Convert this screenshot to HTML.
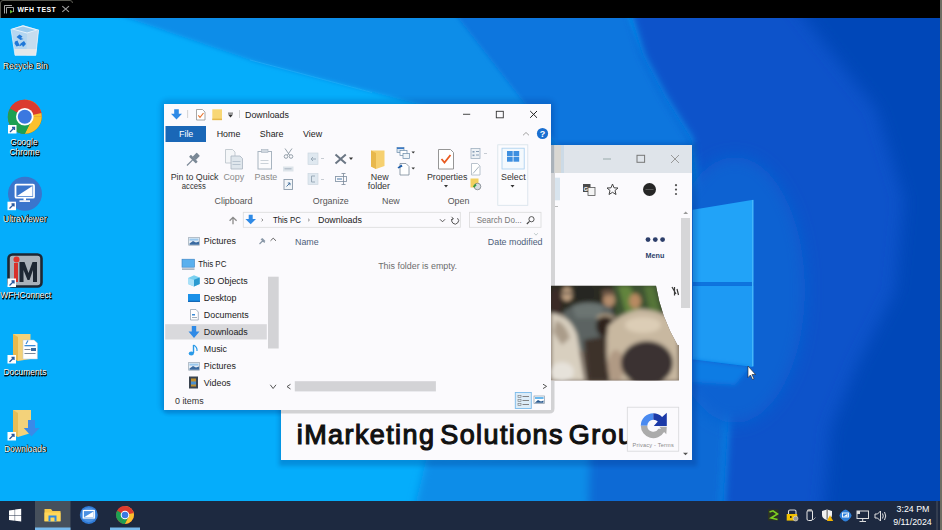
<!DOCTYPE html>
<html><head><meta charset="utf-8">
<style>
*{margin:0;padding:0;box-sizing:border-box}
html,body{width:942px;height:530px;overflow:hidden;background:#000;font-family:"Liberation Sans",sans-serif}
.abs{position:absolute}
#bg{position:absolute;left:0;top:18px;width:942px;height:483px}
#topbar{position:absolute;left:0;top:0;width:942px;height:18px;background:#000}
#taskbar{position:absolute;left:0;top:501px;width:942px;height:29px;background:#1d2940}
#rstrip{position:absolute;left:940px;top:0;width:2px;height:530px;background:#6e6e64}
.lbl{position:absolute;color:#fff;font-size:9.5px;text-align:center;white-space:nowrap;text-shadow:0 0 1px #000,1px 1px 1px #000}
.t{position:absolute;white-space:nowrap;line-height:1}
</style></head><body>
<svg id="bg" width="942" height="483" viewBox="0 18 942 483">
  <defs>
    <filter id="bl" x="-20%" y="-20%" width="140%" height="140%"><feGaussianBlur stdDeviation="8"/></filter>
    <filter id="bl2" x="-20%" y="-20%" width="140%" height="140%"><feGaussianBlur stdDeviation="2"/></filter>
    <filter id="bl3" x="-20%" y="-20%" width="140%" height="140%"><feGaussianBlur stdDeviation="4"/></filter>
  </defs>
  <rect x="0" y="18" width="942" height="483" fill="#05adfb"/>
  <g filter="url(#bl2)">
    <polygon points="104,10 470,10 600,160 640,260 540,170 470,118 372,92 256,62" fill="#0a8de8"/>
  </g>
  <g filter="url(#bl2)">
    <polygon points="452,10 626,10 643,56 665,97.6 691,139 694,196 640,230 600,200 515,91" fill="#0a76de"/>
  </g>
  <line x1="250" y1="60" x2="372" y2="92.5" stroke="#3ab8fa" stroke-width="0.8" opacity="0.5"/>
  <g filter="url(#bl3)">
    <polygon points="427,456 592,452 588,510 414,510" fill="#0a8de8"/>
    <polygon points="590,440 660,300 760,300 729,400 722,510 588,510" fill="#0a6ad5"/>
  </g>
  <g filter="url(#bl3)">
    <polygon points="626,0 960,0 960,520 722,520 729,400 752,368 765,240 700,205 691,139 665,97.6 643,56" fill="#0853ca"/>
  </g>
  <g filter="url(#bl)">
    <polygon points="790,0 960,0 960,520 822,520 831,427 858,363 895,291 904,200 876,109" fill="#0647b8"/>
    <ellipse cx="735" cy="290" rx="70" ry="133" fill="#0a62d2"/>
  </g>
  <polygon points="692.7,209.7 753.3,199.8 753.3,282.2 692.7,282.2" fill="#21a3f8"/>
  <polygon points="692.7,285.7 753.3,285.7 753.3,367 692.7,359.5" fill="#1d9af4"/>
  <rect x="692" y="282.2" width="61.3" height="3.5" fill="#0e74de"/>
  <polygon points="692,359.5 750,367 735,385 692,382" fill="#0a7ce4" filter="url(#bl2)"/>
  <rect x="752" y="200" width="1.4" height="166" fill="#45b6fa"/>
  <path d="M748,366 V377.5 L750.5,375 L752.5,379.5 L754,378.8 L752,374.5 H755.5Z" fill="#fff" stroke="#222" stroke-width="0.6"/>
</svg>
<div id="topbar">
<svg class="abs" style="left:0;top:0" width="942" height="18" font-family="Liberation Sans">
  <path d="M0.5,18 V3 Q0.5,0.5 3,0.5 H70 Q72.5,0.5 72.5,3" stroke="#5c5c54" stroke-width="1" fill="none"/>
  <path d="M4.5,13.5 V5.5 H12" stroke="#b8b8b8" stroke-width="0.9" fill="none"/>
  <path d="M6.5,13.5 V7.5 H13.5 V12" stroke="#b8b8b8" stroke-width="0.9" fill="none"/>
  <path d="M10,9.8 L13.2,11.7 L10,13.6Z" fill="#62b331"/>
  <text x="17.4" y="11.9" font-size="6.9" font-weight="bold" fill="#fff" letter-spacing="0.45">WFH TEST</text>
  <path d="M62.3,6.2 L69,11.9 M69,6.2 L62.3,11.9" stroke="#a0a0a0" stroke-width="1.1"/>
</svg>
</div>
<!-- desktop icons -->
<svg class="abs" style="left:0;top:18px" width="60" height="460" viewBox="0 18 60 460">
  <!-- recycle bin -->
  <path d="M11,29.5 L36,55.5 H15Z" fill="none"/>
  <path d="M11,29 L15,55.3 H35.8 L38.6,29.8 L23,25.3Z" fill="#b4d6f0"/>
  <path d="M27,33.5 L38.6,29.8 L35.8,55.3 H26.5Z" fill="#c6dcee"/>
  <path d="M11,29 L23,25.3 L38.6,29.8 L27,33.5Z" fill="#eaf4fb"/>
  <path d="M14,29 L23,26.5 L35.5,30 L27,32.5Z" fill="#9ccbed"/>
  <path d="M14.5,49 H36.5 L35.8,55.3 H15Z" fill="#e4e8ea"/>
  <path d="M11,29 L15,55.3 H35.8 L38.6,29.8" fill="none" stroke="#eef6fc" stroke-width="0.7"/>
  <g fill="#1f78d8">
    <path d="M16.5,37 L19.5,34.5 L22.5,36.5 L21,38 L23.5,39 L20.5,40 Z"/>
    <path d="M24,41 L26,44 L23,47 L22,45 L19.5,46.5 L20.5,43.5Z"/>
    <path d="M15,41.5 L17.5,40.5 L18.5,43 L20,45.5 L16.5,46.5 L14.5,43.5Z"/>
  </g>
  <!-- chrome -->
  <circle cx="24.8" cy="116.8" r="17" fill="#db3b2f"/>
  <path d="M24.8,116.8 L10.1,108.3 A17,17 0 0 0 16.3,131.5 Z" fill="#1da052"/>
  <path d="M24.8,116.8 L41.8,116.8 A17,17 0 0 1 16.3,131.5 Z" fill="#1da052"/>
  <path d="M24.8,116.8 L41.8,116.8 A17,17 0 0 1 24.8,133.8 L33.3,116.8Z" fill="#fbc02d"/>
  <path d="M24.8,116.8 L16.3,131.5 A17,17 0 0 0 24.8,133.8 L33.3,116.8Z" fill="#1da052"/>
  <path d="M24.8,116.8 L24.8,99.8 A17,17 0 0 1 41.8,116.8Z" fill="#fbc02d"/>
  <path d="M24.8,99.8 A17,17 0 0 0 10.1,108.3 L24.8,116.8 L41.5,113 A17,17 0 0 0 24.8,99.8Z" fill="#db3b2f"/>
  <circle cx="24.8" cy="116.8" r="8.8" fill="#fff"/>
  <circle cx="24.8" cy="116.8" r="7" fill="#3b78e0"/>
  <rect x="8" y="125" width="8.5" height="8.5" fill="#fff"/><path d="M10,132 L14.5,127.5 M12,127.5 H14.5 V130" stroke="#2a5aa0" stroke-width="1.3" fill="none"/>
  <!-- ultraviewer -->
  <circle cx="25" cy="193.8" r="17" fill="#3a75cc"/>
  <rect x="15.5" y="184.7" width="18.5" height="13" rx="1" fill="none" stroke="#fff" stroke-width="1.8"/>
  <path d="M17,196 L32.5,186 L32.5,196Z" fill="#fff"/>
  <rect x="23.5" y="198" width="2.5" height="2.5" fill="#fff"/><rect x="19.5" y="200.3" width="10.5" height="1.6" fill="#fff"/>
  <rect x="7.5" y="201.7" width="8.5" height="8.5" fill="#fff"/><path d="M9.5,208.5 L14,204 M11.5,204 H14 V206.5" stroke="#2a5aa0" stroke-width="1.3" fill="none"/>
  <!-- wfhconnect -->
  <rect x="8.5" y="254.5" width="33" height="32" rx="4" fill="#a9b1b9" stroke="#1d2733" stroke-width="2.6"/>
  <rect x="14" y="263" width="4" height="19" fill="#d8302a"/>
  <circle cx="16.5" cy="259.5" r="3" fill="#e0342c"/>
  <path d="M19.5,282 V262 H24.5 L28.5,273 L32.5,262 H37 V282 H33 V270 L29.5,280 H27.5 L23.5,270 V282Z" fill="#1d2733"/>
  <rect x="7.5" y="278.5" width="8.5" height="8.5" fill="#fff"/><path d="M9.5,285.5 L14,281 M11.5,281 H14 V283.5" stroke="#2a5aa0" stroke-width="1.3" fill="none"/>
  <!-- documents -->
  <path d="M13,334 H30.5 V359 L18,361 L13,358Z" fill="#f3d27a"/>
  <path d="M13,334 L18,337 V361 L13,358Z" fill="#e8b94e"/>
  <path d="M23,340 H34 L37.4,343 V359 H23Z" fill="#fff" stroke="#b8c4d0" stroke-width="0.5"/>
  <rect x="24.5" y="345" width="11" height="1.3" fill="#3a8ad8"/>
  <rect x="24.5" y="349" width="6" height="1" fill="#7a8898"/><rect x="31" y="348" width="5" height="3" fill="#3a6aa0"/>
  <rect x="24.5" y="353" width="11" height="1" fill="#7a8898"/>
  <path d="M26,344 L28,340.5" stroke="#3a8ad8" stroke-width="1.2"/>
  <rect x="7.5" y="355" width="8.5" height="8.5" fill="#fff"/><path d="M9.5,362 L14,357.5 M11.5,357.5 H14 V360" stroke="#2a5aa0" stroke-width="1.3" fill="none"/>
  <!-- downloads -->
  <path d="M13,410 H31 V433 L18,437 L13,434Z" fill="#f3d27a"/>
  <path d="M13,410 L18,413 V437 L13,434Z" fill="#e8bd55"/>
  <path d="M28,420 H35 V428 H39.6 L31.5,436.5 L23.8,428 H28Z" fill="#3a8ae8"/>
  <rect x="7.5" y="432" width="8.5" height="8.5" fill="#fff"/><path d="M9.5,439 L14,434.5 M11.5,434.5 H14 V437" stroke="#2a5aa0" stroke-width="1.3" fill="none"/>
</svg>
<svg class="abs" style="left:0;top:0" width="60" height="460" font-family="Liberation Sans" font-size="8.5" text-anchor="middle">
  <defs><filter id="ls" x="-20%" y="-50%" width="140%" height="200%"><feGaussianBlur stdDeviation="0.5"/></filter></defs>
  <g fill="#000" opacity="0.9" filter="url(#ls)" transform="translate(0.7,0.8)" stroke="#000" stroke-width="0.8">
    <text x="25.5" y="68.5">Recycle Bin</text>
    <text x="24" y="145.3">Google</text>
    <text x="24.5" y="155">Chrome</text>
    <text x="24.9" y="221.5">UltraViewer</text>
    <text x="25.7" y="298">WFHConnect</text>
    <text x="24.9" y="374.8">Documents</text>
    <text x="25.2" y="451.5">Downloads</text>
  </g>
  <g fill="#fff">
    <text x="25.5" y="68.5">Recycle Bin</text>
    <text x="24" y="145.3">Google</text>
    <text x="24.5" y="155">Chrome</text>
    <text x="24.9" y="221.5">UltraViewer</text>
    <text x="25.7" y="298">WFHConnect</text>
    <text x="24.9" y="374.8">Documents</text>
    <text x="25.2" y="451.5">Downloads</text>
  </g>
</svg>
<div id="taskbar">
<svg class="abs" style="left:0;top:0" width="942" height="29" viewBox="0 501 942 29">
  <rect x="35" y="501" width="35.5" height="29" fill="#46505c"/>
  <rect x="35" y="527.5" width="35.5" height="2.5" fill="#76b9ed"/>
  <rect x="110" y="527.5" width="30" height="2.5" fill="#76b9ed"/>
  <!-- win logo -->
  <path d="M9,510.5 L14.7,509.7 V515 H9Z M15.1,509.6 L21.2,508.8 V515 H15.1Z M9,515.4 H14.7 V520.7 L9,520Z M15.1,515.4 H21.2 V521.6 L15.1,520.8Z" fill="#fff"/>
  <!-- explorer folder -->
  <path d="M44.5,509 H51 L52.5,511 H60.5 V521.3 H44.5Z" fill="#f7c948"/>
  <path d="M44.5,512.5 H60.5 V521.3 H44.5Z" fill="#ffd75a"/>
  <rect x="48.5" y="515.5" width="8" height="5.8" fill="#2e86de"/>
  <rect x="50.5" y="517.5" width="4" height="3.8" fill="#ffd75a"/>
  <!-- ultraviewer -->
  <circle cx="88.8" cy="514.9" r="9" fill="#2f7ad6"/>
  <circle cx="88.8" cy="514.9" r="7.3" fill="#4a90e2"/>
  <rect x="83.3" y="510.5" width="11" height="7.5" fill="none" stroke="#fff" stroke-width="1.2"/>
  <path d="M84.5,517 L93.5,511.5 V517Z" fill="#fff"/>
  <!-- chrome -->
  <circle cx="125" cy="515" r="9" fill="#db3b2f"/>
  <path d="M125,515 L117.2,510.5 A9,9 0 0 0 120.5,522.8 L125,515Z" fill="#1da052"/>
  <path d="M125,515 L120.5,522.8 A9,9 0 0 0 125,524 L129.5,515Z" fill="#1da052"/>
  <path d="M125,515 H134 A9,9 0 0 1 125,524 L129.5,515Z" fill="#fbc02d"/>
  <path d="M125,515 V506 A9,9 0 0 1 134,515Z" fill="#fbc02d"/>
  <path d="M125,506 A9,9 0 0 0 117.2,510.5 L125,515 L133.8,513 A9,9 0 0 0 125,506Z" fill="#db3b2f"/>
  <circle cx="125" cy="515" r="4.3" fill="#fff"/><circle cx="125" cy="515" r="3.3" fill="#3b78e0"/>
  <!-- tray -->
  <rect x="768" y="509.5" width="10.5" height="11" fill="#2c3324"/>
  <path d="M769.5,512 L773,510.8 L777.5,514 L771,518 L777.5,519.5" stroke="#7ccf22" stroke-width="1.6" fill="none"/>
  <path d="M788.5,514 V511.5 Q788.5,510 790,510 H794.5 Q796,510 796,511.5 V514" stroke="#d8d8d8" stroke-width="1.1" fill="none"/>
  <rect x="786.7" y="514" width="10.5" height="6.6" fill="#f2c100"/>
  <rect x="790" y="516" width="1.6" height="2" fill="#3a3000"/>
  <circle cx="795.6" cy="518.6" r="2.4" fill="#9a9a9a" stroke="#ddd" stroke-width="0.6"/>
  <path d="M807,512 Q807,510 809,510 H811 Q812.5,510 812.5,512 V519 Q812.5,520.5 811,520.5 H808.5 Q807,520.5 807,519Z" fill="none" stroke="#e8e8e8" stroke-width="1"/>
  <rect x="807.5" y="509.5" width="4.5" height="2" fill="#bbb"/>
  <path d="M813,520 L815.5,517.5" stroke="#bbb" stroke-width="0.8"/>
  <path d="M822,511 L827,509.5 L832,511 V515 Q832,518.5 827,520 Q822,518.5 822,515Z" fill="#f0f0f0"/>
  <rect x="826.6" y="509.8" width="1" height="9.5" fill="#555"/>
  <path d="M830,515.3 L833.2,521 H826.8Z" fill="#f4b400"/>
  <path d="M845.5,509.5 Q847,509.5 849.5,512 Q851.5,514 851.5,515.5 Q851.5,517 849.5,519 Q847,521.5 845.5,521.5 Q844,521.5 841.5,519 Q839.5,517 839.5,515.5 Q839.5,514 841.5,512 Q844,509.5 845.5,509.5Z" fill="#2f80da"/>
  <rect x="842.5" y="513" width="6" height="4" fill="none" stroke="#fff" stroke-width="0.9"/>
  <path d="M843.5,516.5 L847.5,513.8 V516.5Z" fill="#fff"/>
  <rect x="857" y="511" width="11.5" height="7.5" fill="none" stroke="#ddd" stroke-width="1"/>
  <path d="M862.7,518.5 V521.5 M859.5,521.5 H866" stroke="#ddd" stroke-width="1"/>
  <rect x="857" y="511" width="3" height="3" fill="#ddd"/>
  <path d="M875,514 H877.5 L880.5,511 V521 L877.5,518 H875Z" fill="none" stroke="#e0e0e0" stroke-width="1"/>
  <path d="M882.5,513.5 Q884,516 882.5,518.5 M884.5,512 Q887,516 884.5,520" stroke="#e0e0e0" fill="none" stroke-width="1"/>
  <rect x="936.5" y="501" width="1" height="29" fill="#4a5360"/>
  <text x="913" y="511.8" font-family="Liberation Sans" font-size="8.8" fill="#fff" text-anchor="middle">3:24 PM</text>
  <text x="912.5" y="524.8" font-family="Liberation Sans" font-size="8.8" fill="#fff" text-anchor="middle">9/11/2024</text>
</svg>
</div>

<div class="abs" style="left:164px;top:104px;width:387px;height:306px;border-radius:4px;box-shadow:0 -1px 4px 4px rgba(0,40,120,0.16), 0 3px 3px 1px rgba(0,40,120,0.14)"></div>
<!-- chrome window -->
<div class="abs" style="left:281.5px;top:145px;width:410.5px;height:315px;background:#fbfafd;box-shadow:1px 2px 4px 4px rgba(0,30,110,0.22)"></div>
<svg class="abs" style="left:281px;top:145px" width="411" height="315" viewBox="281 145 411 315" font-family="Liberation Sans">
  <defs>
    <filter id="pb" x="-5%" y="-5%" width="110%" height="110%"><feGaussianBlur stdDeviation="2"/></filter>
    <clipPath id="pc"><path d="M551,285.8 H656 Q661,317 677.5,345 L679,345 V380.6 H551Z"/></clipPath>
  </defs>
  <rect x="281" y="145" width="411" height="28" fill="#dfe4ea"/>
  <rect x="551" y="145" width="3.5" height="28" fill="#aab2ba"/>
  <rect x="554.5" y="145" width="6.5" height="28" fill="#d9d7d2"/>
  <rect x="561" y="145" width="3" height="28" fill="#ccdae6"/>
  <rect x="603" y="158.5" width="8" height="1" fill="#9aa"/>
  <rect x="637" y="155.3" width="7.6" height="7" fill="none" stroke="#777" stroke-width="1"/>
  <path d="M671,155 L679,163 M679,155 L671,163" stroke="#999" stroke-width="1"/>
  <rect x="281" y="173" width="411" height="287" fill="#fbfafd"/>
  <rect x="551" y="173" width="4" height="112.8" fill="#d4d4d6"/>
  <rect x="555" y="177.7" width="5" height="22.6" fill="#d8e4ee"/>
  <rect x="555" y="206" width="3" height="0.8" fill="#aaa"/>
  <!-- toolbar icons -->
  <rect x="583" y="184" width="7.5" height="8" fill="#4a4a4a"/>
  <rect x="588" y="187.5" width="7" height="8" fill="#f4f4f4" stroke="#555" stroke-width="0.8"/>
  <text x="583.8" y="190.5" font-size="5.5" fill="#fff" font-weight="bold">G</text>
  <path d="M612.5,184 L614,187.8 L618,188 L615,190.5 L616,194.5 L612.5,192.3 L609,194.5 L610,190.5 L607,188 L611,187.8Z" fill="none" stroke="#444" stroke-width="1"/>
  <circle cx="649.5" cy="189.5" r="6.5" fill="#262626"/>
  <rect x="645.5" y="189" width="8" height="1" fill="#555"/>
  <circle cx="676" cy="185.2" r="1.1" fill="#555"/><circle cx="676" cy="189.6" r="1.1" fill="#555"/><circle cx="676" cy="194" r="1.1" fill="#555"/>
  <!-- page -->
  <path d="M683.3,214 L685.7,211.6 L688.1,214Z" fill="#999"/>
  <rect x="681" y="218" width="9" height="90" fill="#d6d6d8"/>
  <path d="M683,452.8 H688 L685.5,455.3Z" fill="#555"/>
  <circle cx="648" cy="239.6" r="2.4" fill="#2c3e6a"/><circle cx="655.3" cy="239.6" r="2.4" fill="#2c3e6a"/><circle cx="662.6" cy="239.6" r="2.4" fill="#2c3e6a"/>
  <text x="645.6" y="257.6" font-size="7.2" font-weight="bold" fill="#2c3e6a">Menu</text>
  <!-- photo -->
  <g clip-path="url(#pc)">
    <rect x="551" y="285.8" width="128" height="95" fill="#6a5e54"/>
    <g filter="url(#pb)">
      <rect x="545" y="280" width="140" height="34" fill="#2a2a22"/>
      <path d="M612,284 L660,284 L664,320 L616,318Z" fill="#3e5232"/>
      <path d="M618,286 L630,286 L640,312 L626,314Z" fill="#62843e"/>
      <path d="M644,286 L654,286 L660,312 L650,312Z" fill="#557538"/>
      <ellipse cx="556" cy="302" rx="6" ry="14" fill="#3a2c26"/>
      <ellipse cx="567" cy="294" rx="5.5" ry="7" fill="#c4a484"/>
      <rect x="562" y="292" width="10" height="2.3" fill="#3a3a3a"/>
      <ellipse cx="609" cy="300" rx="6" ry="7" fill="#b48c6c"/>
      <ellipse cx="608" cy="292.5" rx="7" ry="3" fill="#6a5444"/>
      <ellipse cx="635" cy="301" rx="6" ry="7.5" fill="#b88a62"/>
      <path d="M563,312 Q586,296 612,308 L616,350 L600,352 L570,350Z" fill="#5c6462"/>
      <path d="M572,306 Q588,299 604,306 L600,318 L576,318Z" fill="#6c7472"/>
      <ellipse cx="585" cy="293" rx="9" ry="8" fill="#252522"/>
      <path d="M551,313 Q570,315 577,335 L585,381 L551,381Z" fill="#d8cfbf"/>
      <path d="M556,320 Q566,324 570,338 L562,345 L553,332Z" fill="#aa9c8a"/>
      <ellipse cx="562" cy="372" rx="12" ry="10" fill="#e6e2da"/>
      <path d="M584,340 L606,336 L612,381 L588,381Z" fill="#3e322a"/>
      <ellipse cx="605" cy="326" rx="9" ry="11" fill="#2e221b"/>
      <path d="M597,318 Q605,312 613,318" stroke="#c8b090" stroke-width="2" fill="none"/>
      <path d="M608,326 Q622,312 640,309 Q662,310 678,324 L679,381 L610,381 Q604,350 608,326Z" fill="#c8b8a0"/>
      <ellipse cx="643" cy="325" rx="18" ry="8" fill="#dccdb6"/>
      <ellipse cx="616" cy="366" rx="8" ry="16" fill="#b09a84"/>
      <ellipse cx="647" cy="363" rx="26" ry="22" fill="#3a3330"/>
    </g>
  </g>
  <path d="M672,287 L676,294 M674.5,287 V295.5 M677,289 L678.5,295" stroke="#3a3a3a" stroke-width="1.2" fill="none"/>
  <!-- bottom -->
  <path d="M281,410 H551 V381 H554.5 V408.5 Q554.5,413.5 549.5,413.5 H281Z" fill="#d2d2d4"/>
  <text x="296.8" y="443.6" font-size="27" fill="#111" stroke="#111" stroke-width="1.15" letter-spacing="1.4" word-spacing="-4">iMarketing Solutions Group</text>
  <rect x="627.3" y="407.2" width="51.4" height="44" fill="#fbfafd" stroke="#d8d8da" stroke-width="0.8"/>
  <g transform="translate(653.3,425.7)">
    <path d="M0,-12.5 A12.5,12.5 0 0 0 -12.5,0 H-6 A6,6 0 0 1 0,-6Z" fill="#4a8af0"/>
    <path d="M0,-12.5 A12.5,12.5 0 0 1 8.8,-8.8 L13.5,-13 V0.3 H0.5 L4.5,-4.2 A6,6 0 0 0 0,-6Z" fill="#1c3aa8"/>
    <path d="M-12.5,0 A12.5,12.5 0 0 0 10.8,6.25 L13,8.5 L13.5,1 L6,1 L7.8,3 L5.2,3 A6,6 0 0 1 -6,0Z" fill="#ababab"/>
  </g>
  <text x="632.5" y="446.8" font-size="5.6" fill="#8a8a8a" letter-spacing="0.2">Privacy - Terms</text>
</svg>
<!-- explorer window -->
<div class="abs" style="left:164px;top:104px;width:387px;height:306px;background:#fbfafd"></div>
<svg class="abs" style="left:164px;top:104px" width="387" height="306" viewBox="164 104 387 306" font-family="Liberation Sans" font-size="8.9">
  <!-- title bar -->
  <path d="M174.2,109.2 H178.8 V113.8 H182 L176.5,119.6 L171,113.8 H174.2Z" fill="#2f8ae6"/>
  <rect x="187.3" y="110" width="0.8" height="8" fill="#c8c8c8"/>
  <path d="M196.5,109.5 H202.5 L205,112 V120 H196.5Z" fill="#fff" stroke="#909090" stroke-width="0.8"/>
  <path d="M198.3,115.3 L200,117.3 L203.5,113" stroke="#e8702a" stroke-width="1.1" fill="none"/>
  <rect x="212.3" y="109.3" width="9.7" height="10.8" fill="#f8d775"/><rect x="212.3" y="118.6" width="9.7" height="1.5" fill="#e6b84a"/>
  <rect x="228" y="112.7" width="5" height="0.8" fill="#333"/><path d="M228,114.5 H233 L230.5,117.4Z" fill="#333"/>
  <rect x="239.2" y="110" width="0.8" height="8" fill="#c8c8c8"/>
  <text x="245" y="117.7" fill="#222">Downloads</text>
  <rect x="463" y="113.8" width="7.2" height="0.9" fill="#333"/>
  <rect x="496.3" y="111.3" width="7" height="6.5" fill="none" stroke="#333" stroke-width="0.9"/>
  <path d="M530.2,111 L537,117.8 M537,111 L530.2,117.8" stroke="#222" stroke-width="1"/>
  <!-- tabs -->
  <rect x="165.5" y="126" width="40.5" height="16" fill="#1a67b7"/>
  <text x="179" y="136.7" fill="#fff">File</text>
  <text x="216.7" y="136.7" fill="#222">Home</text>
  <text x="259.8" y="136.7" fill="#222">Share</text>
  <text x="303" y="136.7" fill="#222">View</text>
  <path d="M523,135.3 L526,132.5 L529,135.3" stroke="#999" stroke-width="0.9" fill="none"/>
  <circle cx="542.5" cy="133.5" r="5.6" fill="#1a6fd0"/>
  <text x="542.5" y="137.3" fill="#fff" font-size="9" font-weight="bold" text-anchor="middle">?</text>
  <!-- ribbon: clipboard -->
  <g transform="translate(193,159.5) rotate(45)" fill="#7a8896">
    <rect x="-2.3" y="-7.5" width="4.6" height="6" rx="0.6"/>
    <rect x="-4.8" y="-1.8" width="9.6" height="2.6" rx="0.4"/>
    <rect x="-0.6" y="0.5" width="1.2" height="8"/>
  </g>
  <text x="170.7" y="180" fill="#333">Pin to Quick</text>
  <text x="181.8" y="189" fill="#333" textLength="24" lengthAdjust="spacingAndGlyphs">access</text>
  <path d="M225.5,149.5 H232.5 L235,152 V163 H225.5Z" fill="#f4f6f8" stroke="#b8c0c8" stroke-width="0.8"/>
  <path d="M231,156 H240 L242.5,158.5 V169 H231Z" fill="#dfe6ec" stroke="#a8b4c0" stroke-width="0.8"/>
  <rect x="232.5" y="161" width="8" height="1" fill="#b8c4d0"/><rect x="232.5" y="164" width="8" height="1" fill="#b8c4d0"/>
  <text x="223.4" y="180" fill="#8a8a8a">Copy</text>
  <rect x="258" y="151.5" width="13.5" height="17.5" fill="#fbfbfd" stroke="#a8b4c0" stroke-width="1"/>
  <rect x="261.5" y="149.5" width="6.5" height="3" fill="#d0d8e0" stroke="#a8b4c0" stroke-width="0.6"/>
  <rect x="260.5" y="160" width="8" height="0.8" fill="#c0c8d0"/><rect x="260.5" y="163" width="8" height="0.8" fill="#c0c8d0"/>
  <text x="254.6" y="180" fill="#8a8a8a">Paste</text>
  <path d="M285,148.5 L289.5,155 M292,148.5 L287.5,155" stroke="#8a96a2" stroke-width="0.9"/>
  <circle cx="286" cy="156.5" r="1.8" fill="none" stroke="#8a96a2" stroke-width="0.9"/><circle cx="291" cy="156.5" r="1.8" fill="none" stroke="#8a96a2" stroke-width="0.9"/>
  <rect x="283" y="166.5" width="10.5" height="5" fill="#dde4ea"/><rect x="284.5" y="168.3" width="7" height="1" fill="#a8b4c0"/>
  <rect x="284" y="179.5" width="8.5" height="10" fill="#f2f5f8" stroke="#8a9aaa" stroke-width="0.9"/>
  <path d="M286.5,186.5 L290,183 M287.8,183 H290 V185.3" stroke="#3a6a9a" stroke-width="0.9" fill="none"/>
  <text x="214.5" y="204" fill="#555">Clipboard</text>
  <!-- organize -->
  <rect x="308" y="153" width="10" height="11.5" fill="#dfe8f0" stroke="#c8d4de" stroke-width="0.6"/>
  <path d="M316,159 H311 M313,157 L311,159 L313,161" stroke="#9aaab8" stroke-width="1" fill="none"/>
  <rect x="321" y="158" width="3" height="0.7" fill="#b0b8c0"/>
  <rect x="308" y="173.5" width="10" height="11" fill="#dfe8f0" stroke="#c8d4de" stroke-width="0.6"/>
  <path d="M315,176 H311.5 V182 H315" stroke="#9aaab8" stroke-width="1" fill="none"/>
  <rect x="321" y="179" width="3" height="0.7" fill="#b0b8c0"/>
  <path d="M335.5,154.5 L345.8,163.5 M345.8,154.5 L335.5,163.5" stroke="#6b7684" stroke-width="2"/>
  <path d="M349,157.5 H353 L351,160Z" fill="#333"/>
  <rect x="335.5" y="176.5" width="11" height="5" fill="none" stroke="#8a9aaa" stroke-width="0.9"/>
  <rect x="337" y="178.2" width="5" height="1.6" fill="#8aaac8"/>
  <path d="M343.5,173.5 V184.5 M341.5,173.5 H345.5 M341.5,184.5 H345.5" stroke="#7a8898" stroke-width="0.8"/>
  <text x="312.8" y="204" fill="#555">Organize</text>
  <!-- new -->
  <path d="M371,150.5 H384.5 V166 L376,169 L371,166.5Z" fill="#f6d070"/>
  <path d="M371,150.5 L376,153 V169 L371,166.5Z" fill="#e8b84c"/>
  <text x="370.8" y="180" fill="#333">New</text>
  <text x="367.8" y="189" fill="#333">folder</text>
  <rect x="397" y="147.5" width="7" height="5" fill="#dde8f2" stroke="#6a8aa8" stroke-width="0.7"/>
  <rect x="400" y="150.5" width="7" height="5" fill="#fff" stroke="#6a8aa8" stroke-width="0.7"/>
  <rect x="403" y="153.5" width="6.5" height="5" fill="#eef4f8" stroke="#6a8aa8" stroke-width="0.7"/>
  <rect x="397" y="147.5" width="7" height="1.5" fill="#3a7ac8"/>
  <path d="M411.5,151.5 H415 L413.2,153.5Z" fill="#333"/>
  <path d="M400,163.5 H406 L409,166.5 V175 H400Z" fill="#fff" stroke="#7a8898" stroke-width="0.8"/>
  <path d="M397.5,167.5 L401.5,164.5 L402.5,166.5 L398.5,168.5Z" fill="#1a5aa8"/>
  <path d="M411.5,167.5 H415 L413.2,169.5Z" fill="#333"/>
  <text x="382" y="204" fill="#555">New</text>
  <!-- open -->
  <path d="M438.5,149.5 H450.5 L453.5,152.5 V169 H438.5Z" fill="#fff" stroke="#8a8a8a" stroke-width="0.9"/>
  <path d="M441.5,159 L444.5,162.5 L450.5,155" stroke="#e85a20" stroke-width="1.8" fill="none"/>
  <text x="426.9" y="180" fill="#333">Properties</text>
  <path d="M444,185 H448 L446,187.5Z" fill="#333"/>
  <rect x="471" y="148.5" width="9" height="10" fill="#eef2f6" stroke="#a0b0c0" stroke-width="0.8"/>
  <rect x="472.5" y="151" width="2" height="1.6" fill="#8aa0b8"/><rect x="476" y="151" width="3" height="1" fill="#8aa0b8"/>
  <rect x="472.5" y="154.5" width="2" height="1.6" fill="#8aa0b8"/><rect x="476" y="154.5" width="3" height="1" fill="#8aa0b8"/>
  <rect x="484" y="153" width="3" height="0.7" fill="#b0b8c0"/>
  <path d="M471.5,163.5 H477.5 L480,166 V175 H471.5Z" fill="#fff" stroke="#a8b4c0" stroke-width="0.8"/>
  <path d="M473,173.5 L479,166.5" stroke="#a8b4c0" stroke-width="1"/>
  <rect x="470.5" y="178.5" width="8" height="9" fill="#f2d060"/>
  <circle cx="477.5" cy="186.5" r="3.3" fill="#d8dde2" stroke="#7a8088" stroke-width="0.8"/>
  <path d="M473.5,187 L476,184.5" stroke="#3a9a40" stroke-width="1.8"/>
  <text x="447.7" y="204" fill="#555">Open</text>
  <!-- select -->
  <rect x="497.8" y="144.8" width="30" height="60.5" fill="#fcfcfe" stroke="#d6e2ea" stroke-width="0.8"/>
  <rect x="502" y="148.2" width="22.2" height="20.8" fill="#f4f9fd" stroke="#a6cdee" stroke-width="0.8"/>
  <rect x="507" y="151" width="5.7" height="5" fill="#3d8fe0"/><rect x="513.5" y="151" width="5.7" height="5" fill="#3d8fe0"/>
  <rect x="507" y="156.7" width="5.7" height="5" fill="#3d8fe0"/><rect x="513.5" y="156.7" width="5.7" height="5" fill="#3d8fe0"/>
  <text x="501" y="180" fill="#333">Select</text>
  <path d="M510.5,185 H514.5 L512.5,187.5Z" fill="#333"/>
  <!-- address row -->
  <path d="M233,224.3 V217.5 M229.6,220.8 L233,217.3 L236.6,220.8" stroke="#8a8a8a" stroke-width="1.3" fill="none"/>
  <rect x="243.3" y="212.3" width="217" height="15" fill="none" stroke="#dadada" stroke-width="0.8"/>
  <path d="M248.7,214.7 H252.7 V219 H256 L250.7,224.3 L245.4,219 H248.7Z" fill="#2f8ae6"/>
  <path d="M261.5,218.7 L263,220 L261.5,221.3" stroke="#777" stroke-width="0.8" fill="none"/>
  <text x="273" y="222.5" fill="#222" textLength="27.8" lengthAdjust="spacingAndGlyphs">This PC</text>
  <path d="M308,218.7 L309.5,220 L308,221.3" stroke="#777" stroke-width="0.8" fill="none"/>
  <text x="318" y="222.5" fill="#222">Downloads</text>
  <path d="M440,219.3 L442.5,221.8 L445,219.3" stroke="#444" stroke-width="0.9" fill="none"/>
  <path d="M457.5,218.2 A3.4,3.4 0 1 1 452.5,218.5" stroke="#555" stroke-width="1" fill="none"/>
  <path d="M451.5,216.8 L453.5,218.8 L451,219.8" stroke="#555" stroke-width="0.9" fill="none"/>
  <rect x="469.5" y="212.3" width="71.5" height="15" fill="none" stroke="#dadada" stroke-width="0.8"/>
  <text x="476.7" y="222.5" fill="#777" textLength="45" lengthAdjust="spacingAndGlyphs">Search Do...</text>
  <circle cx="531.5" cy="219.2" r="2.6" fill="none" stroke="#444" stroke-width="0.9"/>
  <path d="M529.5,221.3 L526.8,224" stroke="#444" stroke-width="1.1"/>
  <!-- nav pane -->
  <rect x="188.7" y="237.6" width="10.8" height="7.6" fill="#e8eef4" stroke="#8a9aaa" stroke-width="0.6"/>
  <path d="M189.5,243.5 L193,241 L196,242.5 L199,241.5 V244.8 H189.5Z" fill="#3a6aa0"/>
  <rect x="189.5" y="238.6" width="9" height="2" fill="#9ac8ee"/>
  <text x="203.8" y="244" fill="#222">Pictures</text>
  <path d="M262,238.5 L265,241.5 M263.5,240 L259.5,244 M261,238.8 L264.7,242.5" stroke="#8a98a8" stroke-width="1.2"/>
  <path d="M270.5,240.8 L273.2,238.2 L276,240.8" stroke="#555" stroke-width="0.9" fill="none"/>
  <text x="295" y="244.8" fill="#4c607a">Name</text>
  <path d="M534.2,233.2 L536,235.2 L537.8,233.2" stroke="#9aa" stroke-width="0.6" fill="none"/>
  <text x="487.8" y="244.8" fill="#4c607a">Date modified</text>
  <rect x="182" y="259.2" width="12.5" height="8" fill="#5ab0ee" stroke="#3a80c0" stroke-width="0.6"/>
  <rect x="182" y="268.5" width="12.5" height="1.2" fill="#8a9aaa"/>
  <text x="198.2" y="266.7" fill="#222" textLength="28.2" lengthAdjust="spacingAndGlyphs">This PC</text>
  <text x="378.2" y="269.2" fill="#6d6d6d">This folder is empty.</text>
  <path d="M188,278 L194,275.3 L199.7,277.5 V284 L194,286.5 L188,284Z" fill="#7ad0f0"/>
  <path d="M194,279.8 L199.7,277.5 V284 L194,286.5Z" fill="#2a9ad0"/>
  <path d="M188,278 L194,280 V286.5 L188,284Z" fill="#a8e0f8"/>
  <text x="203.8" y="283.7" fill="#222">3D Objects</text>
  <rect x="188" y="294" width="12" height="7.8" fill="#1a90e8"/>
  <rect x="188" y="300.8" width="12" height="1" fill="#0a5aa8"/>
  <text x="203.8" y="300.8" fill="#222">Desktop</text>
  <path d="M190.5,309.5 H196 L198.3,312 V320 H190.5Z" fill="#fff" stroke="#8a9aaa" stroke-width="0.7"/>
  <rect x="192" y="314" width="3" height="1.5" fill="#3a8ad8"/><rect x="192" y="317" width="5" height="0.8" fill="#8a9aaa"/>
  <text x="203.8" y="317.8" fill="#222">Documents</text>
  <rect x="165.2" y="324.2" width="101.6" height="15.3" fill="#d9d9dc"/>
  <path d="M191.8,326 H196.2 V331.5 H199.5 L194,338 L188.5,331.5 H191.8Z" fill="#2f8ae6"/>
  <text x="203.8" y="335" fill="#222">Downloads</text>
  <path d="M193.5,345 V353" stroke="#2a9ae8" stroke-width="1.4"/>
  <ellipse cx="191.3" cy="353.5" rx="2.6" ry="2" fill="#2a9ae8"/>
  <path d="M193.5,345 Q197.5,347 197,351" stroke="#2a9ae8" stroke-width="1.2" fill="none"/>
  <text x="203.8" y="352.3" fill="#222">Music</text>
  <rect x="188.7" y="362.6" width="10.8" height="7.6" fill="#e8eef4" stroke="#8a9aaa" stroke-width="0.6"/>
  <path d="M189.5,368.5 L193,366 L196,367.5 L199,366.5 V369.8 H189.5Z" fill="#3a6aa0"/>
  <rect x="189.5" y="363.6" width="9" height="2" fill="#9ac8ee"/>
  <text x="203.8" y="369.3" fill="#222">Pictures</text>
  <rect x="189" y="376.5" width="9" height="12" fill="#3a4450"/>
  <rect x="191" y="378.5" width="5" height="8" fill="#c09030"/>
  <rect x="191" y="381.5" width="5" height="3" fill="#4a90d0"/>
  <text x="203.8" y="386.3" fill="#222">Videos</text>
  <rect x="268" y="276.7" width="10.7" height="71.8" fill="#d3d3d6"/>
  <path d="M270.3,384.8 L273.1,388.5 L276,384.8" stroke="#555" stroke-width="1" fill="none"/>
  <path d="M290.5,384.3 L287,386.6 L290.5,389" stroke="#555" stroke-width="1" fill="none"/>
  <rect x="294.8" y="381.2" width="141.1" height="10.2" fill="#d3d3d6"/>
  <path d="M543,384.2 L546.6,386.4 L543,388.6" stroke="#555" stroke-width="1" fill="none"/>
  <!-- status -->
  <text x="175" y="403.6" fill="#333">0 items</text>
  <rect x="515.3" y="392.5" width="16" height="16" fill="#dcecf8" stroke="#7abaea" stroke-width="0.9"/>
  <rect x="518" y="395.5" width="3" height="2" fill="none" stroke="#777" stroke-width="0.6"/>
  <rect x="518" y="399.5" width="3" height="2" fill="none" stroke="#777" stroke-width="0.6"/>
  <rect x="518" y="403.5" width="3" height="2" fill="none" stroke="#777" stroke-width="0.6"/>
  <rect x="522.5" y="396" width="6.5" height="0.9" fill="#777"/><rect x="522.5" y="400" width="6.5" height="0.9" fill="#777"/><rect x="522.5" y="404" width="6.5" height="0.9" fill="#777"/>
  <rect x="534" y="396" width="10.6" height="7.4" fill="#fff" stroke="#8a9aaa" stroke-width="0.7"/>
  <rect x="535" y="397" width="8.6" height="2" fill="#6ab8ee"/>
  <path d="M535,402.5 L538,400 L541,401.5 L543.5,400.5 V402.8 H535Z" fill="#2a5a90"/>
</svg>
<div id="rstrip"></div>
</body></html>
